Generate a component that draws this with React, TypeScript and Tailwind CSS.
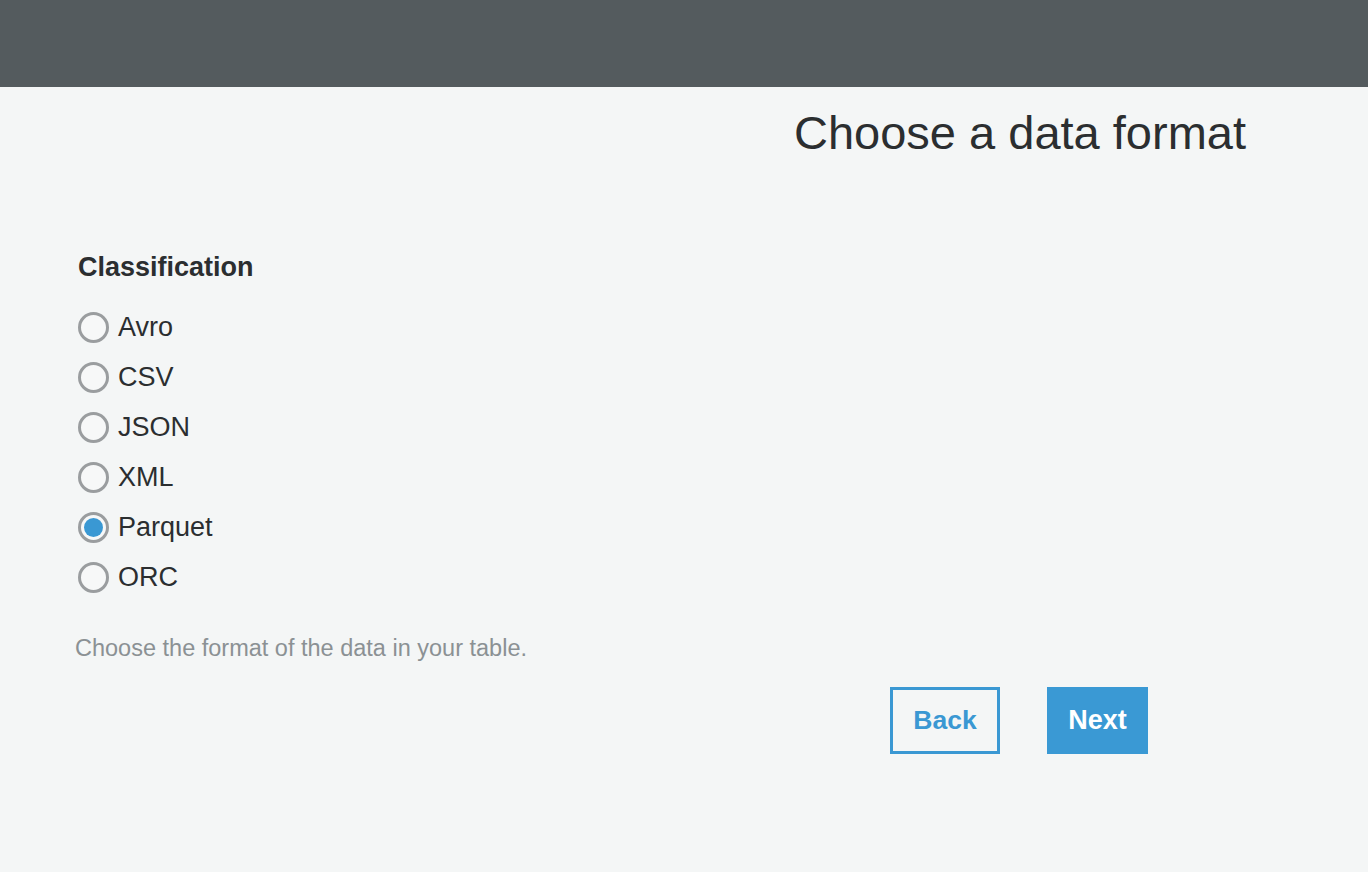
import { useState } from "react";

const FORMATS = ["Avro", "CSV", "JSON", "XML", "Parquet", "ORC"];

export default function App() {
  const [format, setFormat] = useState("Parquet");

  return (
    <div
      className="min-h-[872px] bg-[#f4f6f6] text-[#2b2e30]"
      style={{ fontFamily: '"Liberation Sans", Arial, sans-serif' }}
    >
      <div className="h-[87px] bg-[#545b5e]" />

      <div className="flex justify-end pr-[122px] pt-[17px]">
        <h1 className="text-[47px] leading-[58px]">Choose a data format</h1>
      </div>

      <div className="pl-[78px] pt-[90px]">
        <h2 className="text-[27px] font-bold leading-[30px]">Classification</h2>

        <div role="radiogroup" className="mt-[20px] flex flex-col">
          {FORMATS.map((f) => {
            const selected = format === f;
            return (
              <button
                key={f}
                type="button"
                role="radio"
                aria-checked={selected}
                onClick={() => setFormat(f)}
                className="flex h-[50px] items-center gap-[9px] text-left"
              >
                <span className="flex h-[31px] w-[31px] items-center justify-center rounded-full border-[3px] border-[#9a9d9f] bg-[#f7f8f8]">
                  {selected && (
                    <span className="h-[19px] w-[19px] rounded-full bg-[#3a98d3]" />
                  )}
                </span>
                <span className="text-[27px] leading-none">{f}</span>
              </button>
            );
          })}
        </div>

        <p className="-ml-[3px] mt-[31px] text-[23.5px] leading-[30px] text-[#8b9194]">
          Choose the format of the data in your table.
        </p>
      </div>

      <div className="mt-[24px] flex justify-end gap-[47px] pr-[220px]">
        <button
          type="button"
          className="h-[67px] w-[110px] border-[3px] border-[#3a98d3] text-[26.5px] font-bold text-[#3a98d3]"
        >
          Back
        </button>
        <button
          type="button"
          className="h-[67px] w-[101px] bg-[#3a99d4] text-[27px] font-bold text-white"
        >
          Next
        </button>
      </div>
    </div>
  );
}
